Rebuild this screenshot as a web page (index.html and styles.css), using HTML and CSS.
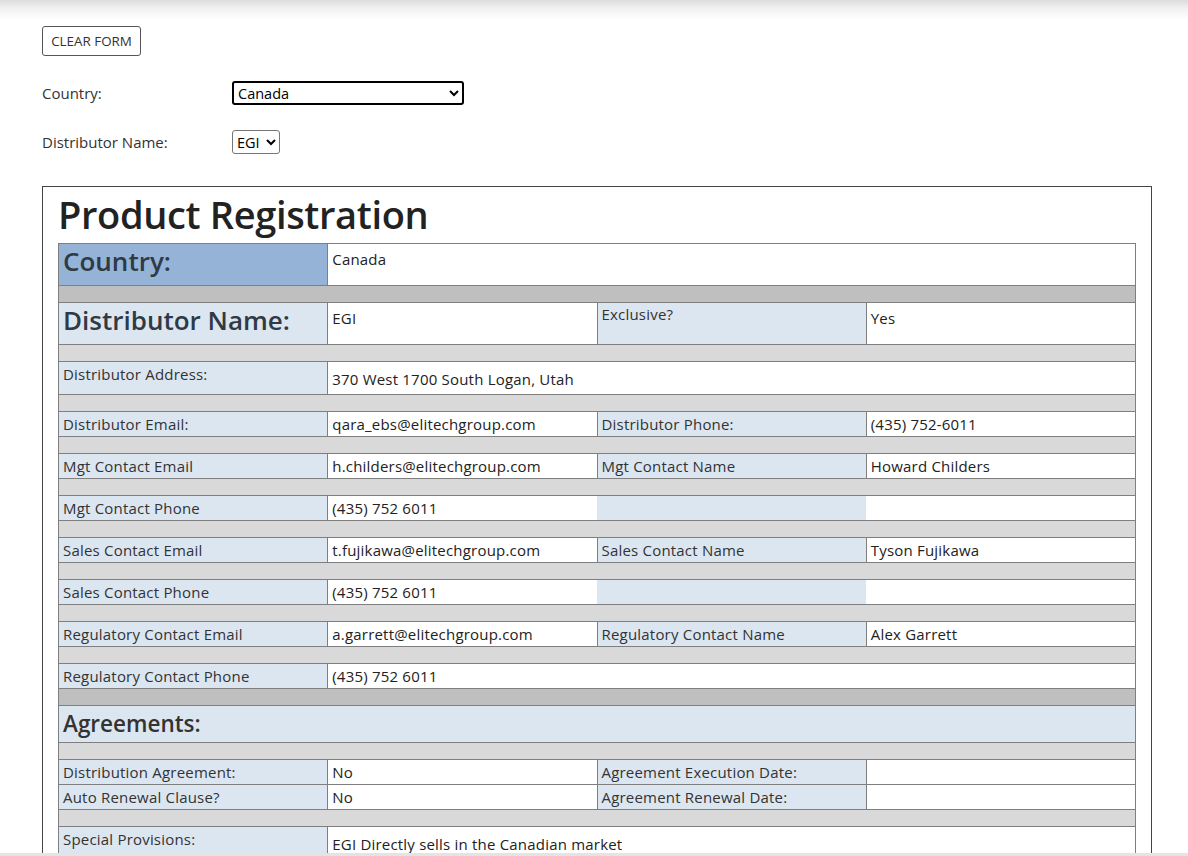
FILE: index.html
```html
<!DOCTYPE html>
<html>
<head>
<meta charset="utf-8">
<link rel="stylesheet" href="styles.css">
</head>
<body>
<div class="topshade"></div>
<div class="page">
  <button class="clear-btn" type="button">CLEAR FORM</button>
  <div class="form-row first">
    <label class="form-label">Country:</label>
    <select class="sel sel-country focused"><option>Canada</option></select>
  </div>
  <div class="form-row second">
    <label class="form-label">Distributor Name:</label>
    <select class="sel sel-dist"><option>EGI</option></select>
  </div>

  <div class="report">
    <h1 class="title">Product Registration</h1>
    <table class="reg">
      <colgroup><col class="c"><col class="c"><col class="c"><col class="c"></colgroup>
      <tr class="big">
        <td class="lbl-blue big-lbl">Country:</td>
        <td class="val" colspan="3">Canada</td>
      </tr>
      <tr><td class="sep dark" colspan="4"></td></tr>
      <tr class="big">
        <td class="lbl big-lbl">Distributor Name:</td>
        <td class="val">EGI</td>
        <td class="lbl top">Exclusive?</td>
        <td class="val">Yes</td>
      </tr>
      <tr><td class="sep" colspan="4"></td></tr>
      <tr class="addr">
        <td class="lbl top">Distributor Address:</td>
        <td class="val" colspan="3">370 West 1700 South Logan, Utah</td>
      </tr>
      <tr><td class="sep" colspan="4"></td></tr>
      <tr>
        <td class="lbl">Distributor Email:</td>
        <td class="val">qara_ebs@elitechgroup.com</td>
        <td class="lbl">Distributor Phone:</td>
        <td class="val">(435) 752-6011</td>
      </tr>
      <tr><td class="sep" colspan="4"></td></tr>
      <tr>
        <td class="lbl">Mgt Contact Email</td>
        <td class="val">h.childers@elitechgroup.com</td>
        <td class="lbl">Mgt Contact Name</td>
        <td class="val">Howard Childers</td>
      </tr>
      <tr><td class="sep" colspan="4"></td></tr>
      <tr>
        <td class="lbl">Mgt Contact Phone</td>
        <td class="val open-r">(435) 752 6011</td>
        <td class="lbl open"></td>
        <td class="val"></td>
      </tr>
      <tr><td class="sep" colspan="4"></td></tr>
      <tr>
        <td class="lbl">Sales Contact Email</td>
        <td class="val">t.fujikawa@elitechgroup.com</td>
        <td class="lbl">Sales Contact Name</td>
        <td class="val">Tyson Fujikawa</td>
      </tr>
      <tr><td class="sep" colspan="4"></td></tr>
      <tr>
        <td class="lbl">Sales Contact Phone</td>
        <td class="val open-r">(435) 752 6011</td>
        <td class="lbl open"></td>
        <td class="val"></td>
      </tr>
      <tr><td class="sep" colspan="4"></td></tr>
      <tr>
        <td class="lbl">Regulatory Contact Email</td>
        <td class="val">a.garrett@elitechgroup.com</td>
        <td class="lbl">Regulatory Contact Name</td>
        <td class="val">Alex Garrett</td>
      </tr>
      <tr><td class="sep" colspan="4"></td></tr>
      <tr>
        <td class="lbl">Regulatory Contact Phone</td>
        <td class="val" colspan="3">(435) 752 6011</td>
      </tr>
      <tr><td class="sep dark" colspan="4"></td></tr>
      <tr class="agr">
        <td class="lbl section" colspan="4">Agreements:</td>
      </tr>
      <tr><td class="sep" colspan="4"></td></tr>
      <tr>
        <td class="lbl">Distribution Agreement:</td>
        <td class="val">No</td>
        <td class="lbl">Agreement Execution Date:</td>
        <td class="val"></td>
      </tr>
      <tr>
        <td class="lbl">Auto Renewal Clause?</td>
        <td class="val">No</td>
        <td class="lbl">Agreement Renewal Date:</td>
        <td class="val"></td>
      </tr>
      <tr><td class="sep" colspan="4"></td></tr>
      <tr class="addr">
        <td class="lbl top">Special Provisions:</td>
        <td class="val" colspan="3">EGI Directly sells in the Canadian market</td>
      </tr>
    </table>
  </div>
</div>
<div class="bottombar"></div>
</body>
</html>
```

FILE: styles.css
```css
html, body {
  margin: 0;
  padding: 0;
  background: #ffffff;
}
body {
  font-family: "Open Sans", "Noto Sans", sans-serif;
  color: #222222;
  font-size: 15px;
}
.topshade {
  height: 20px;
  background: linear-gradient(to bottom, #dcdcdc 0%, #f0f0f0 40%, #ffffff 100%);
}
.bottombar {
  position: fixed;
  left: 0;
  right: 0;
  bottom: 0;
  height: 3px;
  background: #e4e4e4;
}
.page {
  padding: 6px 36px 0 42px;
}
.clear-btn {
  display: block;
  width: 99px;
  height: 30px;
  padding: 0;
  border: 1px solid #555555;
  border-radius: 3px;
  background: #ffffff;
  color: #333333;
  font-family: "Open Sans", "Noto Sans", sans-serif;
  font-size: 13.4px;
  letter-spacing: 0;
}
.form-row {
  display: flex;
  align-items: center;
  height: 24px;
}
.form-row.first { margin-top: 25px; }
.form-row.second { margin-top: 25px; }
.form-label {
  width: 190px;
  font-size: 15px;
  color: #333333;
}
.sel {
  font-family: "Open Sans", "Noto Sans", sans-serif;
  font-size: 14.5px;
  color: #000000;
  background: #ffffff;
  height: 24px;
  padding: 0;
  border-radius: 3px;
}
.sel-country {
  width: 232px;
  border: 2px solid #000000;
  outline: none;
}
.sel-dist {
  width: 48px;
  border: 1px solid #767676;
  padding: 0;
}
.report {
  margin-top: 32px;
  border: 1px solid #444444;
  padding: 0 15px 40px 15px;
  width: 1078px;
}
.title {
  margin: 2px 0 4px 0;
  font-size: 38px;
  font-weight: 600;
  line-height: 50px;
  letter-spacing: -0.35px;
  color: #222222;
}
.reg {
  width: 1078px;
  border-collapse: collapse;
  table-layout: fixed;
}
.reg col.c { width: 25%; }
.reg td {
  border: 1px solid #7f7f7f;
  padding: 2px 4px;
  line-height: 20px;
  font-size: 15px;
  letter-spacing: 0.2px;
  color: #222222;
  vertical-align: middle;
  white-space: nowrap;
  overflow: hidden;
}
.reg td.lbl { background: #dce6f1; color: #333333; }
.reg td.lbl-blue { background: #95b3d7; }
.reg td.val { background: #ffffff; }
.reg td.top { vertical-align: top; }
.reg td.sep {
  background: #d9d9d9;
  padding: 0;
  height: 16px;
  line-height: 16px;
}
.reg td.sep.dark { background: #bfbfbf; }
.reg tr.big td {
  vertical-align: top;
  padding-top: 5px;
  padding-bottom: 0;
  height: 36px;
  line-height: 20px;
}
.reg tr.big td.top { padding-top: 1px; height: 40px; }
.reg tr.big td.big-lbl {
  font-size: 26px;
  font-weight: 600;
  color: #2f3a45;
  letter-spacing: 0;
  line-height: 33px;
  padding-top: 1px;
  padding-bottom: 0;
  height: 40px;
}
.reg tr.addr td { height: 28px; padding-top: 2px; padding-bottom: 2px; }
.reg tr.addr td.val { padding-top: 3px; padding-bottom: 1px; }
.reg tr.agr td { height: 32px; }
.reg td.section {
  font-size: 22.5px;
  font-weight: 600;
  color: #333333;
  letter-spacing: 0;
  vertical-align: middle;
  padding-top: 2px;
  padding-bottom: 2px;
}
.reg td.open-r { border-right: hidden; }
.reg td.open { border-left: hidden; border-right: hidden; }
```
